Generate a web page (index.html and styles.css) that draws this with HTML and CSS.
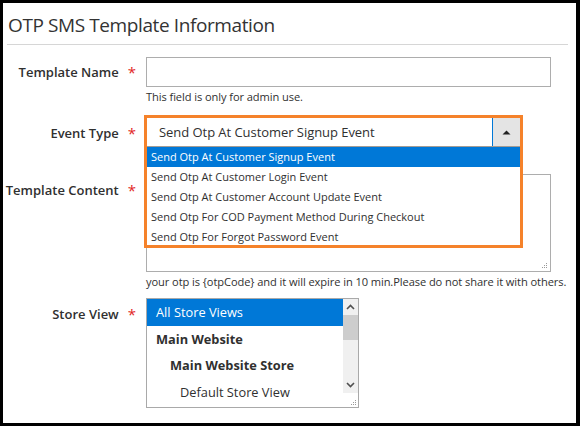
FILE: index.html
```html
<!DOCTYPE html>
<html lang="en">
<head>
<meta charset="utf-8">
<title>OTP SMS Template Information</title>
<link rel="stylesheet" href="styles.css">
</head>
<body>
<div class="frame">
  <h1 class="title">OTP SMS Template Information</h1>

  <div class="field field-name">
    <label class="label"><span>Template Name</span><span class="req">*</span></label>
    <div class="control">
      <input class="input" type="text">
      <div class="note">This field is only for admin use.</div>
    </div>
  </div>

  <div class="field field-event">
    <label class="label label-event"><span>Event Type</span><span class="req">*</span></label>
    <div class="control">
      <div class="combo">
        <div class="combo-frame">
          <div class="select">
            <span class="select-text">Send Otp At Customer Signup Event</span>
            <span class="select-arrow"><svg width="9" height="5" viewBox="0 0 9 5"><path d="M0.5 4.5 L4.5 0.5 L8.5 4.5 Z" fill="#222"/></svg></span>
          </div>
          <ul class="options">
            <li class="opt opt-active">Send Otp At Customer Signup Event</li>
            <li class="opt">Send Otp At Customer Login Event</li>
            <li class="opt">Send Otp At Customer Account Update Event</li>
            <li class="opt">Send Otp For COD Payment Method During Checkout</li>
            <li class="opt">Send Otp For Forgot Password Event</li>
          </ul>
        </div>
      </div>
    </div>
  </div>

  <div class="field field-content">
    <label class="label label-content"><span>Template Content</span><span class="req">*</span></label>
    <div class="control">
      <div class="textarea">
        <svg class="grip" width="7" height="7" viewBox="0 0 7 7"><g fill="#9a9a9a"><rect x="5" y="1" width="1" height="1"/><rect x="3" y="3" width="1" height="1"/><rect x="5" y="3" width="1" height="1"/><rect x="1" y="5" width="1" height="1"/><rect x="3" y="5" width="1" height="1"/><rect x="5" y="5" width="1" height="1"/></g></svg>
      </div>
      <div class="note">your otp is {otpCode} and it will expire in 10 min.Please do not share it with others.</div>
    </div>
  </div>

  <div class="field field-store">
    <label class="label label-store"><span>Store View</span><span class="req">*</span></label>
    <div class="control">
      <div class="multi">
        <ul class="multi-list">
          <li class="mopt mopt-active">All Store Views</li>
          <li class="mopt mopt-bold">Main Website</li>
          <li class="mopt mopt-bold mopt-l2">Main Website Store</li>
          <li class="mopt mopt-l3">Default Store View</li>
        </ul>
        <div class="scroll">
          <div class="sbtn"><svg width="9" height="6" viewBox="0 0 9 6"><path d="M1 5 L4.5 1.5 L8 5" fill="none" stroke="#505050" stroke-width="1.6"/></svg></div>
          <div class="strack"><div class="sthumb"></div></div>
          <div class="sbtn"><svg width="9" height="6" viewBox="0 0 9 6"><path d="M1 1 L4.5 4.5 L8 1" fill="none" stroke="#505050" stroke-width="1.6"/></svg></div>
          <div class="scorner"><svg width="7" height="7" viewBox="0 0 7 7"><g fill="#9a9a9a"><rect x="5" y="1" width="1" height="1"/><rect x="3" y="3" width="1" height="1"/><rect x="5" y="3" width="1" height="1"/><rect x="1" y="5" width="1" height="1"/><rect x="3" y="5" width="1" height="1"/><rect x="5" y="5" width="1" height="1"/></g></svg></div>
        </div>
      </div>
    </div>
  </div>
</div>
</body>
</html>
```

FILE: styles.css
```css
* { box-sizing: border-box; }
html, body { margin: 0; padding: 0; }
body {
  background: #000;
  width: 580px;
  height: 426px;
  overflow: hidden;
  font-family: "Open Sans", "DejaVu Sans", sans-serif;
  color: #303030;
}
.frame {
  margin: 3px 4px 3px 3px;
  width: 573px;
  height: 420px;
  background: #fff;
  padding: 0 8px 0 4px;
  overflow: hidden;
}
.title {
  margin: 0;
  padding: 10px 0 7px 1px;
  font-size: 19px;
  letter-spacing: -0.4px;
  line-height: 24px;
  font-weight: 400;
  color: #333;
  border-bottom: 1px solid #d6d6d6;
}
.field {
  display: grid;
  grid-template-columns: 139px 405px;
}
.field-name { margin-top: 12px; }
.field-event { margin-top: 10px; }
.field-content { margin-top: 23px; }
.field-store { margin-top: 8px; }
.label {
  display: flex;
  justify-content: flex-end;
  align-items: flex-start;
  gap: 9px;
  padding-right: 10px;
  font-size: 13px;
  font-weight: 600;
  line-height: 30px;
  color: #303030;
  white-space: nowrap;
}
.label-event { line-height: 36px; }
.label-content { line-height: 32px; }
.label-store { line-height: 32px; }
.req {
  color: #e22626;
  font-weight: 400;
  font-size: 15px;
}
.input {
  display: block;
  width: 405px;
  height: 30px;
  margin: 0;
  border: 1px solid #adadad;
  background: #fff;
  font: inherit;
}
.note {
  margin-top: 2px;
  font-size: 11.1px;
  letter-spacing: -0.08px;
  line-height: 16px;
  color: #303030;
  white-space: nowrap;
}
.combo {
  position: relative;
  height: 31px;
}
.combo-frame {
  position: absolute;
  top: 0;
  left: -2px;
  width: 379px;
  border: 3px solid #f5822a;
  background: #fff;
  z-index: 2;
}
.select {
  display: flex;
  height: 29px;
  border-bottom: 1px solid #a39c94;
  background: #fff;
}
.select-text {
  flex: 1;
  padding-left: 12px;
  font-size: 13px;
  letter-spacing: -0.05px;
  line-height: 28px;
  color: #303030;
}
.select-arrow {
  width: 28px;
  display: flex;
  align-items: center;
  justify-content: center;
  background: #e4e4e4;
  border-left: 1px solid #0078d7;
}
.options {
  list-style: none;
  margin: 0;
  padding: 0;
  height: 98px;
  overflow: hidden;
}
.opt {
  height: 20px;
  line-height: 20px;
  padding-left: 4px;
  font-size: 11px;
  color: #303030;
  white-space: nowrap;
}
.opt-active {
  background: #0078d7;
  color: #fff;
}
.textarea {
  position: relative;
  width: 405px;
  height: 98px;
  border: 1px solid #adadad;
  background: #fff;
}
.grip {
  position: absolute;
  right: 2px;
  bottom: 2px;
}
.multi {
  display: flex;
  width: 213px;
  height: 110px;
  border: 1px solid #a9a9a9;
  background: #fff;
}
.multi-list {
  list-style: none;
  margin: 0;
  padding: 0;
  flex: 1;
}
.mopt {
  height: 26px;
  line-height: 26px;
  padding-left: 9px;
  font-size: 12.8px;
  color: #303030;
  white-space: nowrap;
}
.mopt-active {
  height: 27px;
  line-height: 27px;
  background: #0078d7;
  color: #fff;
}
.mopt-l2 { height: 27px; line-height: 27px; }
.mopt-bold { font-weight: 700; }
.mopt-l2 { padding-left: 23px; }
.mopt-l3 { padding-left: 33px; }
.scroll {
  width: 15px;
  display: flex;
  flex-direction: column;
  background: #f0f0f0;
}
.sbtn {
  height: 16px;
  display: flex;
  align-items: center;
  justify-content: center;
}
.strack {
  flex: 1;
}
.sthumb {
  height: 25px;
  background: #cdcdcd;
}
.scorner {
  height: 14px;
  background: #fff;
  display: flex;
  align-items: flex-end;
  justify-content: flex-end;
  padding: 0 1px 1px 0;
}
```
